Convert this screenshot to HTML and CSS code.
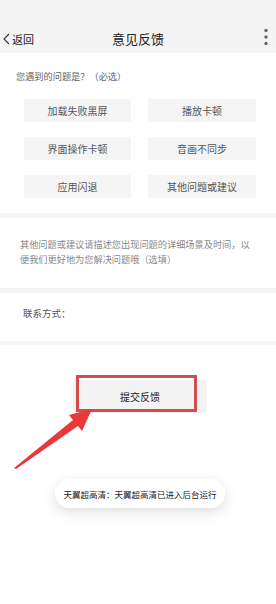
FILE: index.html
```html
<!DOCTYPE html>
<html lang="zh">
<head>
<meta charset="utf-8">
<title>意见反馈</title>
<link rel="stylesheet" href="styles.css">
</head>
<body>
<div class="page">
  <header class="topbar">
    <div class="nav">
      <div class="back">
        <svg class="chev" width="7" height="12" viewBox="0 0 7 12"><polyline points="6,1 1,6 6,11" fill="none" stroke="#333" stroke-width="1.1"/></svg>
        <span>返回</span>
      </div>
      <div class="title">意见反馈</div>
      <svg class="more" width="6" height="18" viewBox="0 0 6 18"><circle cx="3" cy="2.5" r="1.7" fill="#666"/><circle cx="3" cy="9" r="1.7" fill="#666"/><circle cx="3" cy="15.5" r="1.7" fill="#666"/></svg>
    </div>
  </header>

  <section class="issues">
    <p class="question">您遇到的问题是？（必选）</p>
    <div class="grid">
      <div class="opt">加载失败黑屏</div>
      <div class="opt">播放卡顿</div>
      <div class="opt">界面操作卡顿</div>
      <div class="opt">音画不同步</div>
      <div class="opt">应用闪退</div>
      <div class="opt">其他问题或建议</div>
    </div>
  </section>

  <div class="sep"></div>

  <section class="desc">
    <p>其他问题或建议请描述您出现问题的详细场景及时间，以便我们更好地为您解决问题哦（选填）</p>
  </section>

  <div class="sep"></div>

  <section class="contact">联系方式：</section>

  <div class="sep thin"></div>

  <div class="submit-wrap">
    <button class="submit">提交反馈</button>
    <span class="highlight"></span>
  </div>

  <svg class="arrow" width="276" height="604" viewBox="0 0 276 604">
    <polygon points="14,468 73,420 69,415 92,409 82,431 78,426 16,469" fill="#e8393a"/>
  </svg>

  <div class="toast">天翼超高清：天翼超高清已进入后台运行</div>
</div>
</body>
</html>
```

FILE: styles.css
```css
* { box-sizing: border-box; }
html, body { margin: 0; padding: 0; background: #fff; }
body {
  font-family: "Noto Sans CJK SC", "Noto Sans", sans-serif;
  color: #333;
}
.page {
  position: relative;
  width: 276px;
  height: 604px;
  overflow: hidden;
}
.topbar {
  background: #f4f4f4;
  padding-top: 24px;
}
.nav {
  height: 29px;
  display: flex;
  align-items: center;
  justify-content: space-between;
  padding: 0 7px 0 3px;
  position: relative;
}
.back {
  display: flex;
  align-items: center;
  gap: 2px;
  font-size: 11px;
  color: #222;
}
.chev { display: block; margin-top: 1px; }
.title {
  position: absolute;
  left: 0;
  right: 0;
  text-align: center;
  font-size: 13px;
  color: #222;
  pointer-events: none;
}
.more { display: block; margin-top: -3px; }

.issues {
  padding: 17px 0 15px;
}
.question {
  margin: 0 0 17px 16px;
  font-size: 9.2px;
  line-height: 12px;
  color: #666;
}
.grid {
  display: grid;
  grid-template-columns: 107px 108px;
  column-gap: 17px;
  row-gap: 15px;
  margin-left: 24px;
}
.opt {
  height: 23px;
  background: #f5f5f5;
  display: flex;
  align-items: center;
  justify-content: center;
  font-size: 10px;
  color: #555;
}
.sep {
  height: 5px;
  background: #f5f5f5;
}
.sep.thin { height: 4px; }

.desc {
  padding: 19px 20px 21px;
}
.desc p {
  margin: 0;
  font-size: 9.2px;
  line-height: 15px;
  color: #888;
}
.contact {
  padding: 14px 23px 22px;
  font-size: 9.5px;
  line-height: 12px;
  color: #555;
}
.submit-wrap {
  position: relative;
  padding: 35px 0 0 73px;
}
.submit {
  width: 134px;
  height: 33px;
  border: none;
  border-radius: 3px;
  background: #f3f3f3;
  font-family: inherit;
  font-size: 10px;
  color: #222;
  padding: 0;
}
.highlight {
  position: absolute;
  left: 76px;
  top: 30px;
  width: 121px;
  height: 37px;
  border: 3px solid #d54c4c;
}
.arrow {
  position: absolute;
  left: 0;
  top: 0;
  pointer-events: none;
}
.toast {
  position: absolute;
  left: 55px;
  top: 479px;
  width: 170px;
  height: 29px;
  border-radius: 14px;
  background: #fff;
  box-shadow: 0 4px 14px rgba(0,0,0,0.13);
  display: flex;
  align-items: center;
  justify-content: center;
  font-size: 8.5px;
  color: #222;
  white-space: nowrap;
}
```
